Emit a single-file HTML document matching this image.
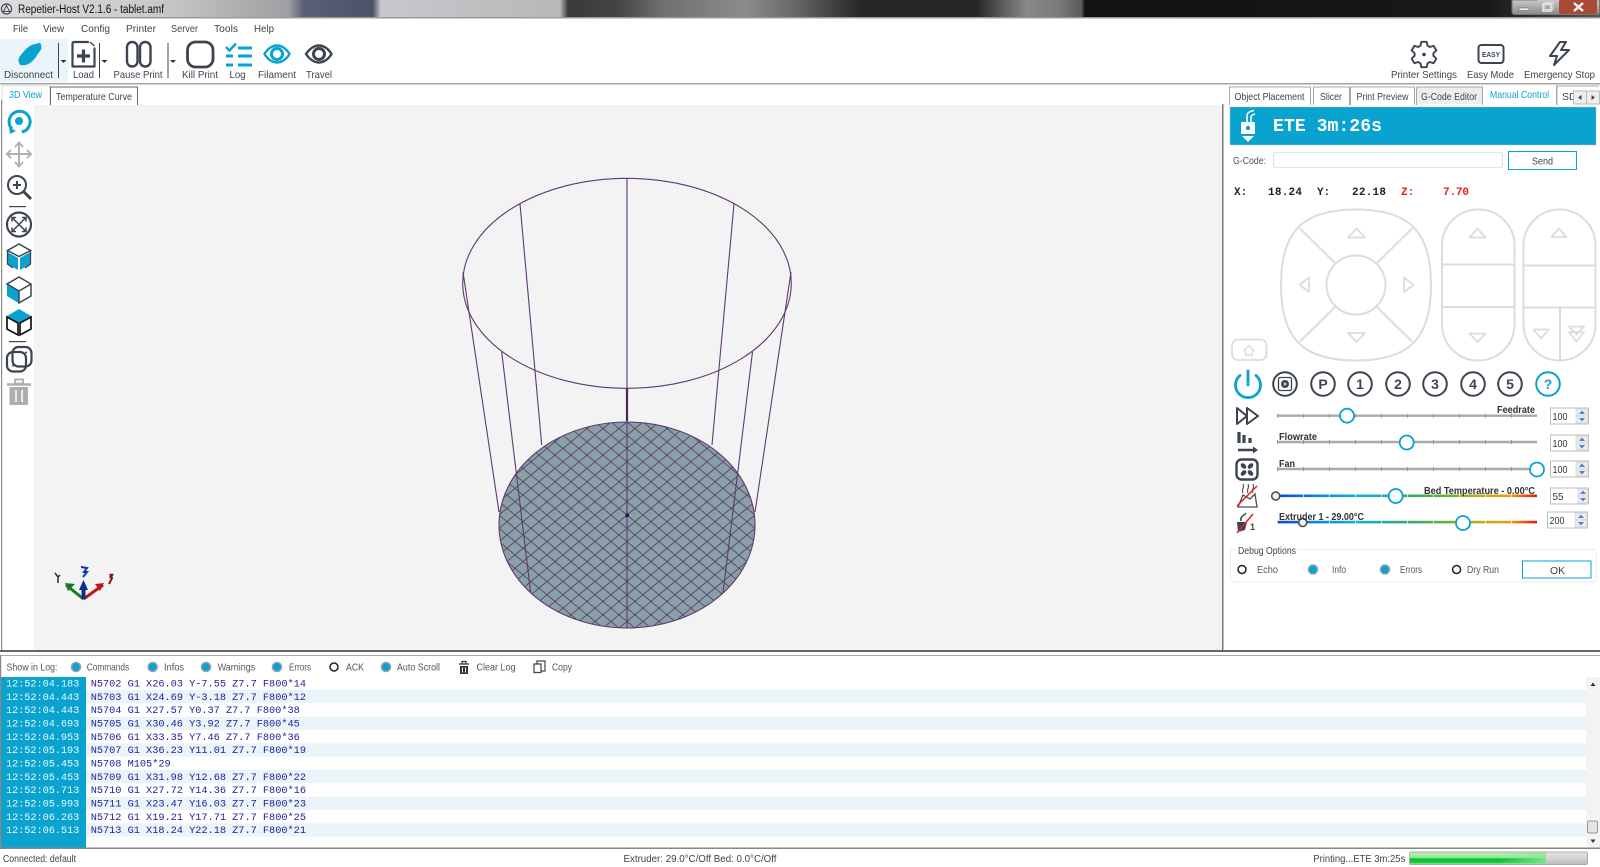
<!DOCTYPE html>
<html><head><meta charset="utf-8"><title>Repetier-Host V2.1.6 - tablet.amf</title>
<style>
html,body{margin:0;padding:0;background:#fff;width:1600px;height:867px;overflow:hidden}
svg{display:block;filter:blur(.3px)}
text{font-family:"Liberation Sans",sans-serif;font-size:10.5px;fill:#3f4448}
.m{font-family:"Liberation Mono",monospace}
.l{font-family:"Liberation Mono",monospace;font-size:10.3px;fill:#22229a}
.ts{font-family:"Liberation Mono",monospace;font-size:10.3px;fill:#e6f8fd}
.xy{font-family:"Liberation Mono",monospace;font-size:11px;font-weight:bold;fill:#222}
.b{font-weight:bold;fill:#333;font-size:10px}
.jog{fill:none;stroke:#dcdcdc;stroke-width:2}
.ic{fill:none;stroke:#3c4450;stroke-width:2.2;stroke-linejoin:round;stroke-linecap:round}
.c{fill:none;stroke:#3c4450;stroke-width:2}
.n{font-size:14px;font-weight:bold;fill:#3c4450;text-anchor:middle}
.sp{fill:#fff;stroke:#bbb;stroke-width:1}
.spt{font-size:10.5px;fill:#333}
.g{fill:#555}
</style></head><body>
<svg width="1600" height="867" viewBox="0 0 1600 867" xmlns="http://www.w3.org/2000/svg">
<defs>
<linearGradient id="tb" x1="0" x2="1" y1="0" y2="0">
<stop offset="0" stop-color="#dcdcdc"/><stop offset=".1" stop-color="#c8c8c8"/><stop offset=".18" stop-color="#a0a0a4"/>
<stop offset=".19" stop-color="#5a6074"/><stop offset=".233" stop-color="#4c5268"/><stop offset=".238" stop-color="#c6c8cc"/>
<stop offset=".35" stop-color="#b8b8b8"/><stop offset=".355" stop-color="#3a3a3a"/><stop offset=".385" stop-color="#444"/>
<stop offset=".415" stop-color="#707070"/><stop offset=".466" stop-color="#8c8c8c"/><stop offset=".498" stop-color="#666"/><stop offset=".538" stop-color="#262626"/>
<stop offset=".61" stop-color="#262626"/><stop offset=".628" stop-color="#606060"/><stop offset=".642" stop-color="#888"/><stop offset=".662" stop-color="#7a7a7a"/><stop offset=".676" stop-color="#5a5a5a"/><stop offset=".678" stop-color="#121212"/>
<stop offset=".93" stop-color="#181818"/><stop offset="1" stop-color="#555"/>
</linearGradient>
<linearGradient id="wc" x1="0" x2="0" y1="0" y2="1"><stop offset="0" stop-color="#c8c8c8"/><stop offset="1" stop-color="#8a8a8a"/></linearGradient>
<linearGradient id="sl" x1="0" x2="1" y1="0" y2="0">
<stop offset="0" stop-color="#0a46d8"/><stop offset=".14" stop-color="#0a80e0"/><stop offset=".3" stop-color="#10b0dc"/><stop offset=".5" stop-color="#30a878"/><stop offset=".62" stop-color="#58b040"/><stop offset=".78" stop-color="#b8b020"/><stop offset=".9" stop-color="#f09a10"/><stop offset="1" stop-color="#f01010"/>
</linearGradient>
<linearGradient id="pg" x1="0" x2="0" y1="0" y2="1"><stop offset="0" stop-color="#b8f0b8"/><stop offset=".48" stop-color="#90e698"/><stop offset=".52" stop-color="#08c030"/><stop offset=".85" stop-color="#10c838"/><stop offset="1" stop-color="#a0e8a0"/></linearGradient>
<linearGradient id="pgb" x1="0" x2="0" y1="0" y2="1"><stop offset="0" stop-color="#e4e4e4"/><stop offset=".5" stop-color="#d4d4d4"/><stop offset="1" stop-color="#bbb"/></linearGradient>
<linearGradient id="pf" x1="0" x2="1" y1="0" y2="0"><stop offset="0" stop-color="#90e698" stop-opacity="0"/><stop offset="1" stop-color="#90e698" stop-opacity=".85"/></linearGradient>
<pattern id="hatch" width="16" height="13.3" patternUnits="userSpaceOnUse" patternTransform="translate(627 515)">
<path d="M-1 -.83L17 14.13M17 -.83L-1 14.13" stroke="#4d3565" stroke-width=".8" fill="none"/>
</pattern>
<clipPath id="disc"><ellipse cx="627" cy="525" rx="128" ry="103"/></clipPath>
</defs>

<!-- title bar -->
<rect x="0" y="0" width="1600" height="17" fill="url(#tb)"/>
<rect x="0" y="17" width="1600" height="1.500" fill="#9a9a9a"/>
<circle cx="6.500" cy="9" r="5" fill="#e8e8e8" stroke="#445" stroke-width="1.200"/><path d="M6.500 5.500L3.500 11.500H9.500Z" fill="none" stroke="#445" stroke-width="1"/>
<text x="18" y="13" style="font-size:11.5px;fill:#111" textLength="146" lengthAdjust="spacingAndGlyphs">Repetier-Host V2.1.6 - tablet.amf</text>
<path d="M1512 0V12a2.500 2.500 0 0 0 2.500 2.500H1597a2.500 2.500 0 0 0 2.500-2.500V0Z" fill="url(#wc)" stroke="#777"/>
<rect x="1559" y="0" width="38" height="14" rx="2" fill="#a84a34"/>
<rect x="1537" y="0" width="22" height="14" fill="url(#wc)"/>
<rect x="1519" y="8" width="10" height="2.500" fill="#eee" stroke="#555" stroke-width=".5"/>
<rect x="1543" y="4" width="8" height="7" fill="none" stroke="#eee" stroke-width="1.500"/><rect x="1545" y="2.500" width="8" height="7" fill="none" stroke="#ddd"/>
<path d="M1574 3L1583 11M1583 3L1574 11" stroke="#f4f4f4" stroke-width="2.500"/>

<!-- menu -->
<text x="13" y="32" textLength="15" lengthAdjust="spacingAndGlyphs">File</text>
<text x="43" y="32" textLength="21" lengthAdjust="spacingAndGlyphs">View</text>
<text x="81" y="32" textLength="29" lengthAdjust="spacingAndGlyphs">Config</text>
<text x="126" y="32" textLength="30" lengthAdjust="spacingAndGlyphs">Printer</text>
<text x="171" y="32" textLength="27" lengthAdjust="spacingAndGlyphs">Server</text>
<text x="214" y="32" textLength="24" lengthAdjust="spacingAndGlyphs">Tools</text>
<text x="254" y="32" textLength="20" lengthAdjust="spacingAndGlyphs">Help</text>

<!-- toolbar -->
<rect x="0" y="39" width="68" height="43" fill="#e9f5fa"/>
<path d="M19 62C17 58 22 54 25 50C28 47 32 44 36 44C39 42 42 43 41 46C43 49 38 53 36 57C33 61 28 66 23 65C20 66 19 64 19 62Z" fill="#0aa3cf"/>
<path d="M58.500 43V78" stroke="#444" stroke-width="1"/><path d="M60.500 60h6l-3 3z" fill="#333"/>
<path class="ic" d="M88 42H74a1.500 1.500 0 0 0-1.500 1.500V66.500H94.500V48.500"/><path d="M90 42L94.500 46" stroke="#3c4450" stroke-width="1.400"/>
<path d="M83.500 49.500V62.500M77 56H90" stroke="#3c4450" stroke-width="3.200"/>
<path d="M99.500 43V78" stroke="#444" stroke-width="1"/><path d="M101.500 60h6l-3 3z" fill="#333"/>
<rect x="127" y="42" width="10.500" height="24.500" rx="5.200" class="ic" style="stroke-width:2.400"/>
<rect x="140" y="42" width="10.500" height="24.500" rx="5.200" class="ic" style="stroke-width:2.400"/>
<path d="M168 43V78" stroke="#444" stroke-width="1"/><path d="M170 60h6l-3 3z" fill="#333"/>
<rect x="187.500" y="42" width="25.500" height="25" rx="8" class="ic" style="stroke-width:2.800"/>
<path d="M226 47L229.500 50.500L236 43.500" fill="none" stroke="#0aa3cf" stroke-width="2.400"/>
<path d="M238 48H252M238 56H252M238 65H252M226 56H233M226 65H233" stroke="#0aa3cf" stroke-width="3"/>
<path d="M264.500 54C268 48 273 45.500 277 45.500C281 45.500 286 48 289.500 54C286 60 281 62.500 277 62.500C273 62.500 268 60 264.500 54Z" fill="none" stroke="#0aa3cf" stroke-width="2.400"/>
<circle cx="277" cy="54" r="5.500" fill="none" stroke="#0aa3cf" stroke-width="3"/>
<path d="M306 54C310 48 315 45.500 319 45.500C323 45.500 328 48 331.500 54C328 60 323 62.500 319 62.500C315 62.500 310 60 306 54Z" fill="none" stroke="#3c4450" stroke-width="2.400"/>
<circle cx="319" cy="54" r="5.500" fill="none" stroke="#3c4450" stroke-width="3"/>
<text x="4" y="78" textLength="49" lengthAdjust="spacingAndGlyphs">Disconnect</text>
<text x="73" y="78" textLength="21" lengthAdjust="spacingAndGlyphs">Load</text>
<text x="113.500" y="78" textLength="49" lengthAdjust="spacingAndGlyphs">Pause Print</text>
<text x="182" y="78" textLength="36" lengthAdjust="spacingAndGlyphs">Kill Print</text>
<text x="229.500" y="78" textLength="16" lengthAdjust="spacingAndGlyphs">Log</text>
<text x="258" y="78" textLength="38" lengthAdjust="spacingAndGlyphs">Filament</text>
<text x="306" y="78" textLength="26" lengthAdjust="spacingAndGlyphs">Travel</text>

<!-- right toolbar -->
<path class="ic" transform="translate(1424 54.500)" style="stroke-width:1.900" d="M-3.56 -8.81L-2.70 -12.72H2.70L3.56 -8.81L5.85 -7.49L9.66 -8.70L12.36 -4.02L9.41 -1.32V1.32L12.36 4.02L9.66 8.70L5.85 7.49L3.56 8.81L2.70 12.72H-2.70L-3.56 8.81L-5.85 7.49L-9.66 8.70L-12.36 4.02L-9.41 1.32V-1.32L-12.36 -4.02L-9.66 -8.70L-5.85 -7.49Z"/>
<circle cx="1424" cy="54.500" r="1.800" fill="#3c4450"/>
<rect x="1478.500" y="45" width="25" height="18" rx="3" fill="none" stroke="#3c4450" stroke-width="2"/>
<text x="1482" y="57" style="font-size:7px;font-weight:bold;fill:#3c4450" textLength="18" lengthAdjust="spacingAndGlyphs">EASY</text>
<path class="ic" d="M1560 42L1550 56H1557L1554 65L1569 50H1561L1566 42Z" style="stroke-width:2"/>
<text x="1391" y="78" textLength="66" lengthAdjust="spacingAndGlyphs">Printer Settings</text>
<text x="1467" y="78" textLength="47" lengthAdjust="spacingAndGlyphs">Easy Mode</text>
<text x="1524" y="78" textLength="71" lengthAdjust="spacingAndGlyphs">Emergency Stop</text>
<rect x="0" y="83" width="1600" height="1.500" fill="#a4a4a4"/>

<!-- left tabs -->
<path d="M2 105V86H50V105" fill="#fff" stroke="#d0d0d0" stroke-width=".8"/>
<text x="9" y="98" style="fill:#0aa3cf" textLength="33" lengthAdjust="spacingAndGlyphs">3D View</text>
<path d="M50.500 105V87H137.500V105" fill="#fff" stroke="#666" stroke-width="1"/>
<text x="56" y="100" textLength="76" lengthAdjust="spacingAndGlyphs">Temperature Curve</text>

<!-- view -->
<rect x="34" y="105" width="1188" height="545" fill="#f3f3f3"/>
<rect x="1" y="100" width="1.200" height="550" fill="#8c8c8c"/>
<rect x="1222" y="104" width="1.500" height="546" fill="#7a7a7a"/>

<!-- left toolbar icons -->
<path d="M12 129A10.500 10.500 0 1 1 22 132" fill="none" stroke="#0aa3cf" stroke-width="3"/>
<path d="M9 127L10 134L16 131Z" fill="#0aa3cf"/>
<circle cx="19" cy="121" r="4" fill="#0aa3cf"/><circle cx="22.500" cy="131" r="1" fill="#0aa3cf"/><circle cx="27" cy="128" r="1" fill="#0aa3cf"/>
<g fill="none" stroke="#b2b2b2" stroke-width="2"><path d="M19 143V166M7.500 154H30.500M15 147L19 142.500L23 147M15 162L19 166.500L23 162M11 150L7 154L11 158M27 150L31 154L27 158"/></g>
<circle cx="17" cy="185" r="9" class="ic" style="stroke-width:2"/><path d="M23.500 191.500L31 199" stroke="#3c4450" stroke-width="3"/><path d="M13 185H21M17 181V189" stroke="#3c4450" stroke-width="2"/>
<rect x="9" y="206" width="17" height="1.200" fill="#444"/>
<circle cx="19" cy="224.500" r="12" class="ic"/><path d="M12 217.500L26 231.500M26 217.500L12 231.500M12 221.500V217.500H16M26 221.500V217.500H22M12 227.500V231.500H16M26 227.500V231.500H22" fill="none" stroke="#3c4450" stroke-width="1.500"/>
<path d="M7.500 252L18 258V270L7.500 264ZM30.500 252L20 258V270L30.500 264Z" fill="#0aa3cf"/>
<path d="M19 244L30.500 250.500L19 256.500L7.500 250.500Z" fill="#fff" stroke="#3c4450" stroke-width="1.500"/>
<path d="M7.500 251V264L13 268M30.500 251V264L25 268" fill="none" stroke="#3c4450" stroke-width="1.300"/>
<path d="M7 284L18.500 291V303L7 296Z" fill="#0aa3cf"/>
<path d="M19 277L31 284V296L19 303V291L7 284ZM19 291L31 284" fill="none" stroke="#3c4450" stroke-width="1.500"/>
<path d="M19 309L31 316L19 323L7 316Z" fill="#0aa3cf"/>
<path d="M7 317L18 323V335L7 329ZM31 317L20 323V335L31 329Z" fill="none" stroke="#111" stroke-width="1.700"/>
<rect x="9" y="341" width="17" height="1.200" fill="#444"/>
<rect x="7" y="352" width="19" height="19.500" rx="6" class="ic" style="stroke-width:2.200"/>
<rect x="12.500" y="347" width="19" height="19.500" rx="6" class="ic" style="stroke-width:2.200"/>
<circle cx="13" cy="365.500" r="1" fill="#3c4450"/><circle cx="26" cy="352.500" r="1" fill="#3c4450"/>
<path d="M7 384.500H31" stroke="#aeaeae" stroke-width="2.600"/><rect x="15" y="379.500" width="8" height="4" fill="none" stroke="#aeaeae" stroke-width="1.800"/>
<path d="M9.500 387H28V403.500a1.500 1.500 0 0 1-1.500 1.500H11a1.500 1.500 0 0 1-1.500-1.500Z" fill="#aeaeae"/><path d="M16 390V402M22 390V402" stroke="#f3f3f3" stroke-width="1.800"/>

<!-- 3D model -->
<g fill="none" stroke="#5e3a6f" stroke-width="1.100">
<ellipse cx="627" cy="525" rx="128" ry="103" fill="#8a9fa6" stroke="none"/>
<rect x="495" y="420" width="264" height="212" fill="url(#hatch)" stroke="none" clip-path="url(#disc)"/>
<ellipse cx="627" cy="525" rx="128" ry="103"/>
<ellipse cx="627" cy="283.300" rx="164.300" ry="105"/>
<path d="M627 178V628M520 204L541.700 445M734 204L712 445M501.700 352L530.700 592.700M752.500 352L723 592.700M463 272L499 512M791 272L755 512"/>
<path d="M627 388V421" stroke-width="2.200" stroke="#4a2a5a"/>
</g>
<rect x="625.500" y="513.500" width="3.500" height="3.500" fill="#2e1240"/>

<!-- gizmo -->
<path d="M83.500 599L66 585" stroke="#157a20" stroke-width="3"/><path d="M65 583L75 584L68 591Z" fill="#157a20"/>
<path d="M83.500 599L103 585" stroke="#c01818" stroke-width="3"/><path d="M104 583L95 584L100 591Z" fill="#c01818"/>
<path d="M83.500 599V588" stroke="#0c2c90" stroke-width="4"/><path d="M83.500 580L79 590H88Z" fill="#0c2c90"/>
<path d="M81 567L87 568L84 572L87 572L83 577" fill="none" stroke="#1234b0" stroke-width="2"/>
<path d="M55 573L58 577L60 575M58 577V583" fill="none" stroke="#1a3a20" stroke-width="1.500"/>
<path d="M113 574L110 578L112 574M110 574L112 578L109 584" fill="none" stroke="#8a1414" stroke-width="2"/>

<!-- right tabs -->
<rect x="1416" y="87" width="67" height="17.500" fill="#eee"/>
<g fill="none" stroke="#a8a8a8" stroke-width="1">
<path d="M1229.500 105V87H1310.500V105M1313.500 105V87H1349.500V105M1350.500 105V87H1414.500V105M1416.500 105V87H1482.500V105"/><path d="M1556.500 105V85M1557 105V86H1599"/>
</g>
<text x="1234.500" y="100" textLength="70" lengthAdjust="spacingAndGlyphs">Object Placement</text>
<text x="1320" y="100" textLength="22" lengthAdjust="spacingAndGlyphs">Slicer</text>
<text x="1356.500" y="100" textLength="52" lengthAdjust="spacingAndGlyphs">Print Preview</text>
<text x="1421" y="100" textLength="56" lengthAdjust="spacingAndGlyphs">G-Code Editor</text>
<text x="1490" y="98" style="fill:#0aa3cf" textLength="59" lengthAdjust="spacingAndGlyphs">Manual Control</text>
<text x="1562" y="100">SD</text>
<rect x="1573.500" y="91" width="13" height="13" fill="#eee" stroke="#bbb"/><rect x="1586.500" y="91" width="13" height="13" fill="#eee" stroke="#bbb"/>
<path d="M1581.500 95L1578 97.500L1581.500 100Z M1591.500 95L1595 97.500L1591.500 100Z" fill="#445"/>

<!-- header -->
<rect x="1230" y="107" width="366" height="38" fill="#0aa3cf" stroke="#bbb" stroke-width=".5"/>
<path d="M1247 122V116C1247 113 1249 111.500 1254 110.500" fill="none" stroke="#fff" stroke-width="1.500"/><path d="M1251 122V117C1251 115.500 1253 114.500 1255 114" fill="none" stroke="#fff" stroke-width="1.500"/>
<rect x="1241" y="122" width="14" height="12" rx="1" fill="#fff"/><circle cx="1248" cy="128" r="2.200" fill="#0aa3cf"/>
<path d="M1242 136H1254L1248 142Z" fill="#fff"/>
<text x="1273" y="131" class="m" style="font-size:18px;font-weight:bold;fill:#fff" textLength="109" lengthAdjust="spacingAndGlyphs">ETE 3m:26s</text>

<!-- gcode -->
<text x="1233" y="164" textLength="33" lengthAdjust="spacingAndGlyphs" class="g">G-Code:</text>
<rect x="1273.500" y="152.500" width="229" height="15" rx="1.500" fill="#fff" stroke="#dfe4e6"/>
<rect x="1508.500" y="151.500" width="68" height="18" fill="#fff" stroke="#0aa3cf"/>
<text x="1532" y="164.500" textLength="21" lengthAdjust="spacingAndGlyphs">Send</text>
<text x="1234" y="195" class="xy">X:</text>
<text x="1268" y="195" class="xy" textLength="34" lengthAdjust="spacing">18.24</text>
<text x="1317" y="195" class="xy">Y:</text>
<text x="1352" y="195" class="xy" textLength="34" lengthAdjust="spacing">22.18</text>
<text x="1401" y="195" class="xy" style="fill:#e81818">Z:</text>
<text x="1443" y="195" class="xy" style="fill:#e81818" textLength="26" lengthAdjust="spacing">7.70</text>

<!-- jog -->
<path class="jog" d="M1356 209.500C1410 209.500 1431 232 1431 285C1431 338 1410 360.500 1356 360.500C1302 360.500 1281 338 1281 285C1281 232 1302 209.500 1356 209.500Z"/>
<circle cx="1356" cy="285" r="29.500" class="jog"/>
<path class="jog" d="M1300 228.500L1335 263M1412 228.500L1377 263M1300 341.500L1335 307M1412 341.500L1377 307"/>
<rect x="1442" y="209.500" width="72.500" height="151" rx="36" class="jog"/>
<path class="jog" d="M1442 264.500H1514.500M1442 307H1514.500"/>
<rect x="1523.500" y="209.500" width="72" height="151" rx="36" class="jog"/>
<path class="jog" d="M1523.500 265.500H1595.500M1523.500 307.500H1595.500M1560 307.500V360.500"/>
<g fill="none" stroke="#dcdcdc" stroke-width="1.800" stroke-linejoin="round">
<path d="M1348 237.500H1365L1356.500 228.500Z"/><path d="M1348 333H1365L1356.500 342Z"/>
<path d="M1309 277.500V292L1299.500 284.800Z"/><path d="M1404 277.500V292L1413.500 284.800Z"/>
<path d="M1469.500 237.500H1485.500L1477.500 228.500Z"/><path d="M1469.500 333.500H1485.500L1477.500 342Z"/>
<path d="M1551.500 237H1566.500L1559 228.500Z"/><path d="M1533.500 329.500H1549L1541 338.500Z"/>
<path d="M1569 326.500H1584L1576.500 334.500ZM1569 332H1584L1576.500 341.500Z"/>
<rect x="1232" y="339.500" width="34.500" height="20.500" rx="6"/>
<path d="M1243.500 351L1249 345.500L1254.500 351M1245.500 350V355H1252.500V350" stroke-width="1.400"/>
</g>

<!-- circle buttons -->
<path d="M1240 375.500A12.500 12.500 0 1 0 1256 375.500" fill="none" stroke="#0aa3cf" stroke-width="2.800" stroke-linecap="round"/>
<path d="M1248 371V385" stroke="#0aa3cf" stroke-width="2.800" stroke-linecap="round"/>
<circle cx="1285" cy="384" r="11.800" class="c"/><rect x="1278.500" y="377.500" width="13" height="13" rx="1.500" fill="none" stroke="#3c4450" stroke-width="1.300"/><circle cx="1285" cy="384" r="4" fill="#3c4450"/><circle cx="1285" cy="384" r="1.500" fill="#ccc"/>
<circle cx="1323" cy="384" r="11.800" class="c"/><text x="1323" y="389" class="n">P</text>
<circle cx="1360" cy="384" r="11.800" class="c"/><text x="1360" y="389" class="n">1</text>
<circle cx="1398" cy="384" r="11.800" class="c"/><text x="1398" y="389" class="n">2</text>
<circle cx="1435" cy="384" r="11.800" class="c"/><text x="1435" y="389" class="n">3</text>
<circle cx="1473" cy="384" r="11.800" class="c"/><text x="1473" y="389" class="n">4</text>
<circle cx="1510" cy="384" r="11.800" class="c"/><text x="1510" y="389" class="n">5</text>
<circle cx="1548" cy="384" r="11.800" fill="none" stroke="#0aa3cf" stroke-width="2"/><text x="1548" y="389" class="n" style="fill:#0aa3cf">?</text>

<!-- slider icons -->
<path class="ic" d="M1237 408V424L1247 416ZM1247 408V424L1258 416Z" style="stroke-width:2"/>
<path d="M1239 432V443M1244 435V443M1250 438V443" stroke="#3c4450" stroke-width="3.200"/>
<path d="M1238 450H1256" stroke="#3c4450" stroke-width="2.400"/><path d="M1253 446.500L1258 450L1253 453.500Z" fill="#3c4450"/>
<rect x="1236.500" y="459.500" width="21" height="20" rx="5" class="ic" style="stroke-width:2.400"/>
<g fill="#3c4450"><ellipse cx="1243.500" cy="466" rx="3.300" ry="2.200" transform="rotate(45 1243.500 466)"/><ellipse cx="1250.500" cy="466" rx="3.300" ry="2.200" transform="rotate(-45 1250.500 466)"/><ellipse cx="1243.500" cy="473" rx="3.300" ry="2.200" transform="rotate(-45 1243.500 473)"/><ellipse cx="1250.500" cy="473" rx="3.300" ry="2.200" transform="rotate(45 1250.500 473)"/></g>
<path d="M1238 507L1243 495L1250 499L1255 494L1257 507Z" fill="none" stroke="#4a4f55" stroke-width="1.300"/><path d="M1243 493C1241 489 1245 488 1243 484M1248 493C1246 489 1250 488 1248 484M1253 493C1251 489 1255 488 1253 484" fill="none" stroke="#555" stroke-width="1.200"/>
<path d="M1237 506L1257 486" stroke="#e82020" stroke-width="1.500"/>
<path d="M1237 522H1247L1245 530L1238 532Z" fill="#3c4450"/><path d="M1241 521C1240 516 1244 516 1246 513" fill="none" stroke="#3c4450" stroke-width="1.500"/>
<path d="M1237 533L1253 514" stroke="#e82020" stroke-width="1.500"/>
<text x="1250" y="530" style="font-size:9px;font-weight:bold">1</text>

<!-- sliders -->
<g fill="none">
<path d="M1277 415.700H1537M1277 442H1537M1277 469H1537" stroke="#aaa" stroke-width="2.400"/>
<path d="M1277 415.700H1537M1277 442H1537M1277 469H1537" stroke="#999" stroke-width="4" stroke-dasharray="1 25"/>
<rect x="1277" y="494.500" width="260" height="2.600" fill="url(#sl)"/><rect x="1277" y="520.800" width="260" height="2.600" fill="url(#sl)"/>
<path d="M1277 495.800H1537M1277 522H1537" stroke="#fff" stroke-width="3.600" stroke-dasharray="1 25" opacity=".7"/>
<g fill="#fff" stroke="#0aa3cf" stroke-width="1.800">
<circle cx="1347" cy="415.700" r="7"/><circle cx="1406.700" cy="442.500" r="7"/><circle cx="1537" cy="469.500" r="7"/><circle cx="1395.700" cy="496" r="7"/><circle cx="1463" cy="523" r="7"/>
</g>
<g fill="#f4f4f4" stroke="#4a4f55" stroke-width="1.600"><circle cx="1275.700" cy="496" r="4"/><circle cx="1302.700" cy="522.500" r="4"/></g>
</g>
<text x="1497" y="413" class="b" textLength="38" lengthAdjust="spacingAndGlyphs">Feedrate</text>
<text x="1279" y="440" class="b" textLength="38" lengthAdjust="spacingAndGlyphs">Flowrate</text>
<text x="1279" y="467" class="b" textLength="16" lengthAdjust="spacingAndGlyphs">Fan</text>
<text x="1424" y="494" class="b" textLength="111" lengthAdjust="spacingAndGlyphs">Bed Temperature - 0.00°C</text>
<text x="1279" y="520" class="b" textLength="85" lengthAdjust="spacingAndGlyphs">Extruder 1 - 29.00°C</text>

<!-- spinners -->
<rect x="1550.500" y="408" width="38" height="16" class="sp"/><text x="1552.500" y="420" class="spt" textLength="15" lengthAdjust="spacingAndGlyphs">100</text>
<rect x="1550.500" y="435" width="38" height="16" class="sp"/><text x="1552.500" y="447" class="spt" textLength="15" lengthAdjust="spacingAndGlyphs">100</text>
<rect x="1550.500" y="461" width="38" height="16" class="sp"/><text x="1552.500" y="473" class="spt" textLength="15" lengthAdjust="spacingAndGlyphs">100</text>
<rect x="1550.500" y="488" width="38" height="16" class="sp"/><text x="1552.500" y="500" class="spt" textLength="11" lengthAdjust="spacingAndGlyphs">55</text>
<rect x="1547.500" y="512" width="40" height="16" class="sp"/><text x="1549.500" y="524" class="spt" textLength="15" lengthAdjust="spacingAndGlyphs">200</text>
<g fill="#e8edf2" stroke="#ccc" stroke-width=".6">
<rect x="1576" y="409" width="12" height="7"/><rect x="1576" y="416" width="12" height="7"/>
<rect x="1576" y="436" width="12" height="7"/><rect x="1576" y="443" width="12" height="7"/>
<rect x="1576" y="462" width="12" height="7"/><rect x="1576" y="469" width="12" height="7"/>
<rect x="1578" y="489" width="10" height="7"/><rect x="1578" y="496" width="10" height="7"/>
<rect x="1575" y="513" width="12" height="7"/><rect x="1575" y="520" width="12" height="7"/>
</g>
<path fill="#5a7fc0" d="M1579 414L1582 410.500L1585 414ZM1579 418L1582 421.500L1585 418ZM1579 441L1582 437.500L1585 441ZM1579 445L1582 448.500L1585 445ZM1579 467L1582 463.500L1585 467ZM1579 471L1582 474.500L1585 471ZM1580 494L1583 490.500L1586 494ZM1580 498L1583 501.500L1586 498ZM1578 518L1581 514.500L1584 518ZM1578 522L1581 525.500L1584 522Z"/>

<!-- debug options -->
<rect x="1230.500" y="549.500" width="366" height="32.500" rx="3" fill="none" stroke="#e6ecf1"/>
<rect x="1235" y="545" width="62" height="10" fill="#fff"/>
<text x="1238" y="554" textLength="58" lengthAdjust="spacingAndGlyphs">Debug Options</text>
<g fill="#fff" stroke="#222" stroke-width="1.500"><circle cx="1242" cy="569.500" r="4"/><circle cx="1456.600" cy="569.500" r="4"/></g>
<g fill="#8fa4b0"><circle cx="1313" cy="569.500" r="5.300"/><circle cx="1385" cy="569.500" r="5.300"/></g>
<g fill="#0aa3cf"><circle cx="1313" cy="569.500" r="3.800"/><circle cx="1385" cy="569.500" r="3.800"/></g>
<text x="1257" y="573" class="g" textLength="21" lengthAdjust="spacingAndGlyphs">Echo</text>
<text x="1332" y="573" class="g" textLength="14" lengthAdjust="spacingAndGlyphs">Info</text>
<text x="1400" y="573" class="g" textLength="22" lengthAdjust="spacingAndGlyphs">Errors</text>
<text x="1467" y="573" class="g" textLength="32" lengthAdjust="spacingAndGlyphs">Dry Run</text>
<rect x="1522.500" y="561" width="68.500" height="17" fill="#fff" stroke="#0aa3cf"/>
<text x="1550" y="574">OK</text>

<!-- splitter -->
<rect x="0" y="650" width="1600" height="2" fill="#666"/>
<rect x="0" y="655" width="1600" height="1" fill="#aaa"/>

<!-- log toolbar -->
<text x="6.500" y="670.500" class="g" textLength="51" lengthAdjust="spacingAndGlyphs">Show in Log:</text>
<g fill="#8fa4b0"><circle cx="76" cy="667" r="5.300"/><circle cx="152.700" cy="667" r="5.300"/><circle cx="206" cy="667" r="5.300"/><circle cx="277" cy="667" r="5.300"/><circle cx="386" cy="667" r="5.300"/></g>
<g fill="#0aa3cf"><circle cx="76" cy="667" r="3.800"/><circle cx="152.700" cy="667" r="3.800"/><circle cx="206" cy="667" r="3.800"/><circle cx="277" cy="667" r="3.800"/><circle cx="386" cy="667" r="3.800"/></g>
<circle cx="334" cy="667" r="4" fill="#fff" stroke="#222" stroke-width="1.500"/>
<text x="86.700" y="670.500" class="g" textLength="42.500" lengthAdjust="spacingAndGlyphs">Commands</text>
<text x="164" y="670.500" class="g" textLength="20" lengthAdjust="spacingAndGlyphs">Infos</text>
<text x="217.700" y="670.500" class="g" textLength="37.500" lengthAdjust="spacingAndGlyphs">Warnings</text>
<text x="289" y="670.500" class="g" textLength="22" lengthAdjust="spacingAndGlyphs">Errors</text>
<text x="346" y="670.500" class="g" textLength="18" lengthAdjust="spacingAndGlyphs">ACK</text>
<text x="397" y="670.500" class="g" textLength="43" lengthAdjust="spacingAndGlyphs">Auto Scroll</text>
<path d="M459 664H469M462 664V661.500H466V664" stroke="#333" fill="none" stroke-width="1.200"/><path d="M460 666H468V674H460Z" fill="#333"/><path d="M462.500 667.500V672.500M465.500 667.500V672.500" stroke="#fff"/>
<text x="476.500" y="670.500" class="g" textLength="39" lengthAdjust="spacingAndGlyphs">Clear Log</text>
<path d="M534 664V672.500H541V664Z M537 664V661H545V671H541" fill="#fff" stroke="#444" stroke-width="1.200"/>
<text x="552" y="670.500" class="g" textLength="20" lengthAdjust="spacingAndGlyphs">Copy</text>

<!-- log body -->
<rect x="1" y="677" width="85" height="171" fill="#0aa3cf"/>
<g fill="#ebf4f8">
<rect x="86" y="690" width="1500" height="13.300"/><rect x="86" y="716.700" width="1500" height="13.300"/><rect x="86" y="743.300" width="1500" height="13.300"/><rect x="86" y="770" width="1500" height="13.300"/><rect x="86" y="796.700" width="1500" height="13.300"/><rect x="86" y="823.300" width="1500" height="13.300"/>
</g>
<rect x="0" y="655" width="1.200" height="193" fill="#888"/>
<g>
<text x="6" y="686.500" class="ts" textLength="73.300">12:52:04.183</text><text x="90.700" y="686.500" class="l" textLength="215.300">N5702 G1 X26.03 Y-7.55 Z7.7 F800*14</text>
<text x="6" y="699.800" class="ts" textLength="73.300">12:52:04.443</text><text x="90.700" y="699.800" class="l" textLength="215.300">N5703 G1 X24.69 Y-3.18 Z7.7 F800*12</text>
<text x="6" y="713.100" class="ts" textLength="73.300">12:52:04.443</text><text x="90.700" y="713.100" class="l" textLength="209.100">N5704 G1 X27.57 Y0.37 Z7.7 F800*38</text>
<text x="6" y="726.500" class="ts" textLength="73.300">12:52:04.693</text><text x="90.700" y="726.500" class="l" textLength="209.100">N5705 G1 X30.46 Y3.92 Z7.7 F800*45</text>
<text x="6" y="739.800" class="ts" textLength="73.300">12:52:04.953</text><text x="90.700" y="739.800" class="l" textLength="209.100">N5706 G1 X33.35 Y7.46 Z7.7 F800*36</text>
<text x="6" y="753.100" class="ts" textLength="73.300">12:52:05.193</text><text x="90.700" y="753.100" class="l" textLength="215.300">N5707 G1 X36.23 Y11.01 Z7.7 F800*19</text>
<text x="6" y="766.500" class="ts" textLength="73.300">12:52:05.453</text><text x="90.700" y="766.500" class="l" textLength="80">N5708 M105*29</text>
<text x="6" y="779.800" class="ts" textLength="73.300">12:52:05.453</text><text x="90.700" y="779.800" class="l" textLength="215.300">N5709 G1 X31.98 Y12.68 Z7.7 F800*22</text>
<text x="6" y="793.100" class="ts" textLength="73.300">12:52:05.713</text><text x="90.700" y="793.100" class="l" textLength="215.300">N5710 G1 X27.72 Y14.36 Z7.7 F800*16</text>
<text x="6" y="806.500" class="ts" textLength="73.300">12:52:05.993</text><text x="90.700" y="806.500" class="l" textLength="215.300">N5711 G1 X23.47 Y16.03 Z7.7 F800*23</text>
<text x="6" y="819.800" class="ts" textLength="73.300">12:52:06.263</text><text x="90.700" y="819.800" class="l" textLength="215.300">N5712 G1 X19.21 Y17.71 Z7.7 F800*25</text>
<text x="6" y="833.100" class="ts" textLength="73.300">12:52:06.513</text><text x="90.700" y="833.100" class="l" textLength="215.300">N5713 G1 X18.24 Y22.18 Z7.7 F800*21</text>
</g>

<!-- scrollbar -->
<rect x="1586" y="677" width="14" height="171" fill="#f3f3f3"/>
<path d="M1590.500 686L1593 682.500L1595.500 686ZM1590.500 839.500L1593 843L1595.500 839.500Z" fill="#333"/>
<rect x="1587.500" y="821" width="10" height="12" rx="1.500" fill="#e4e4e4" stroke="#999"/>

<!-- status -->
<rect x="0" y="847.500" width="1600" height="1.500" fill="#888"/>
<text x="3" y="862" textLength="73" lengthAdjust="spacingAndGlyphs">Connected: default</text>
<text x="623.500" y="862" textLength="153" lengthAdjust="spacingAndGlyphs">Extruder: 29.0°C/Off Bed: 0.0°C/Off</text>
<text x="1313.300" y="862" textLength="92" lengthAdjust="spacingAndGlyphs">Printing...ETE 3m:25s</text>
<rect x="1409.500" y="852" width="178" height="12.500" rx="1.500" fill="url(#pgb)" stroke="#999" stroke-width=".7"/>
<rect x="1410" y="852.500" width="136" height="11.500" fill="url(#pg)"/>
<rect x="1500" y="852.500" width="46" height="11.500" fill="url(#pf)"/>
</svg>
</body></html>
